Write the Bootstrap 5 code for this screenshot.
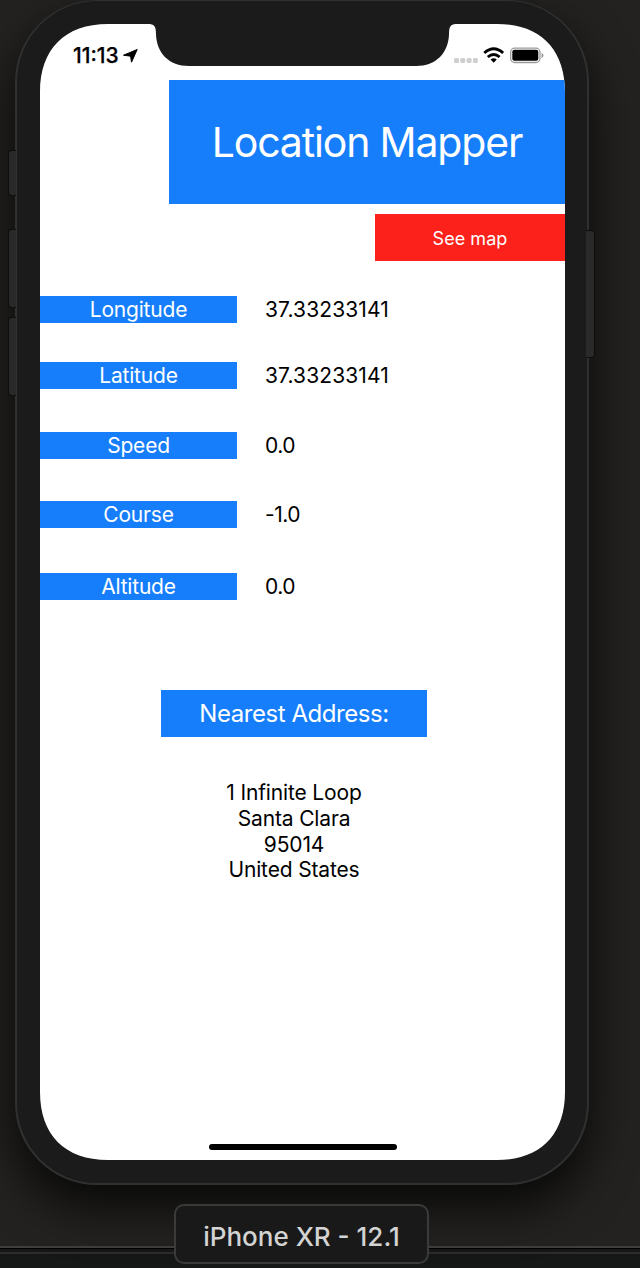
<!DOCTYPE html>
<html lang="en">
<head>
<meta charset="utf-8">
<meta name="viewport" content="width=device-width, initial-scale=1">
<title>Location Mapper</title>
<link href="https://cdn.jsdelivr.net/npm/bootstrap@5.3.0/dist/css/bootstrap.min.css" rel="stylesheet">
<style>
  body { width: 640px; height: 1268px; background: #232220; color: #000; font-family: Inter, "Liberation Sans", sans-serif; }
  .desk-edge { top: 1246px; height: 22px; background: linear-gradient(#3f3f3d 0 2px, #000 2px 3px, #171717 3px 6px, #2c2c2c 6px 8px, #161717 8px); }
  .phone { width: 574px; height: 1185px; margin-left: 15px; padding: 22px 22px 23px 23px; background: #1b1b1b; border: 2px solid #303030; border-top-width: 1px; padding-top: 23px; border-radius: 82px; box-shadow: 0 22px 46px 2px rgba(0,0,0,.72); }
  .side-key { left: -9px; width: 8px; background: #2a2a2a; border: 1px solid #0e0e0e; border-right: 0; border-radius: 4px 0 0 4px; }
  .side-key.power { left: 569px; width: 9px; border: 1px solid #0e0e0e; border-left: 0; border-radius: 0 4px 4px 0; }
  .screen { width: 525px; height: 1136px; background: #fff;
    clip-path: path("M0 68C0 25 25 0 68 0H108C114 0 116 2 116 10C116.500 29 129 42 149 42H376C396 42 408.500 29 409 10C409 2 411 0 417 0H457C500 0 525 25 525 68V1068C525 1111 500 1136 457 1136H68C25 1136 0 1111 0 1068Z"); }
  .status { height: 56px; padding: 21px 20px 0 33px; }
  .clock { font-size: 21px; font-weight: 500; line-height: 22px; -webkit-text-stroke: .25px #000; }
  .blue { background: #167efb; color: #fff; }
  .title-bar { width: 396px; height: 124px; padding-top: 2px; font-size: 41px; font-weight: 400; letter-spacing: -1.15px; }
  .map-btn { width: 190px; height: 47px; margin-top: 10px; background: #fc221b; color: #fff; font-size: 18px; letter-spacing: .05px; }
  .map-btn span { display: block; padding-top: 1px; }
  .readings { padding-top: 35px; height: 429px; }
  .reading { height: 27px; font-size: 21px; line-height: 28px; }
  .reading .blue { width: 197px; margin-right: 28px; letter-spacing: -.2px; }
  .coord { letter-spacing: .12px; }
  .short { letter-spacing: -.5px; }
  .address-title { width: 266px; height: 47px; margin-left: 121px; font-size: 24px; letter-spacing: -.45px; padding-top: 1px; }
  .address-lines { width: 266px; margin: 43px 0 0 121px; font-size: 21px; line-height: 25.800px; letter-spacing: -.15px; }
  .home-bar { width: 188px; height: 6px; margin: auto auto 10px 169px; border-radius: 3px; background: #000; }
  .device-tag { width: 255px; height: 60px; margin: 19px 0 0 174px; padding-top: 4px; background: #191919; border: 2px solid #3a3a3a; border-radius: 10px; color: #d3d3d3; font-size: 26px; font-weight: 500; }
</style>
</head>
<body class="position-relative overflow-hidden">
<div class="desk-edge position-absolute start-0 w-100"></div>
<main class="phone position-relative">
  <div class="side-key position-absolute" style="top:149px;height:46px"></div>
  <div class="side-key position-absolute" style="top:228px;height:79px"></div>
  <div class="side-key position-absolute" style="top:316px;height:79px"></div>
  <div class="side-key power position-absolute" style="top:229px;height:128px"></div>
  <div class="screen d-flex flex-column">
    <div class="status d-flex justify-content-between align-items-start flex-shrink-0">
      <div class="d-flex"><span class="clock">11:13</span>
        <svg class="ms-1 mt-1" width="15" height="15" viewBox="0 0 15 15"><path d="M14.200 .5L8.500 13.200L7.600 7.200L.5 6.200Z" stroke="#000" stroke-width="1" stroke-linejoin="round"/></svg>
      </div>
      <svg width="91" height="22" viewBox="0 0 91 22">
        <g fill="#cfcfcf"><rect y="13" width="5" height="5" rx="1.500"/><rect x="6.300" y="13" width="5" height="5" rx="1.500"/><rect x="12.600" y="13" width="5" height="5" rx="1.500"/><rect x="18.900" y="13" width="5" height="5" rx="1.500"/></g>
        <g fill="none" stroke="#000" stroke-width="2.900"><path d="M30.300 8Q39.700 -.4 49.100 8M33.800 12Q39.700 6.800 45.600 12"/></g>
        <path d="M36.600 14.600Q39.700 12 42.800 14.600L39.700 17.700Z"/>
        <rect x="56.700" y="3.200" width="29.300" height="14.300" rx="4" fill="none" stroke="#9b9b9b" stroke-width="1.300"/>
        <rect x="58.300" y="4.800" width="26" height="11" rx="2"/>
        <path d="M87.500 8Q89.500 8.600 89.500 10.400Q89.500 12.300 87.500 13Z" fill="#999"/>
      </svg>
    </div>
    <h1 class="title-bar blue d-flex align-items-center justify-content-center ms-auto mb-0 flex-shrink-0"><span>Location Mapper</span></h1>
    <button class="map-btn btn rounded-0 border-0 p-0 ms-auto flex-shrink-0"><span>See map</span></button>
    <div class="readings flex-shrink-0">
      <div class="reading d-flex"><div class="blue text-center">Longitude</div><span class="coord">37.33233141</span></div>
      <div class="reading d-flex" style="margin-top:39px"><div class="blue text-center">Latitude</div><span class="coord">37.33233141</span></div>
      <div class="reading d-flex" style="margin-top:43px"><div class="blue text-center">Speed</div><span class="short">0.0</span></div>
      <div class="reading d-flex" style="margin-top:42px"><div class="blue text-center">Course</div><span class="short">-1.0</span></div>
      <div class="reading d-flex" style="margin-top:45px"><div class="blue text-center">Altitude</div><span class="short">0.0</span></div>
    </div>
    <div class="address-title blue d-flex align-items-center justify-content-center flex-shrink-0">Nearest Address:</div>
    <address class="address-lines text-center">1 Infinite Loop<br>Santa Clara<br>95014<br>United States</address>
    <div class="home-bar"></div>
  </div>
</main>
<div class="device-tag position-relative d-flex align-items-center justify-content-center">iPhone XR - 12.1</div>
<script src="https://cdn.jsdelivr.net/npm/bootstrap@5.3.0/dist/js/bootstrap.bundle.min.js"></script>
</body>
</html>
